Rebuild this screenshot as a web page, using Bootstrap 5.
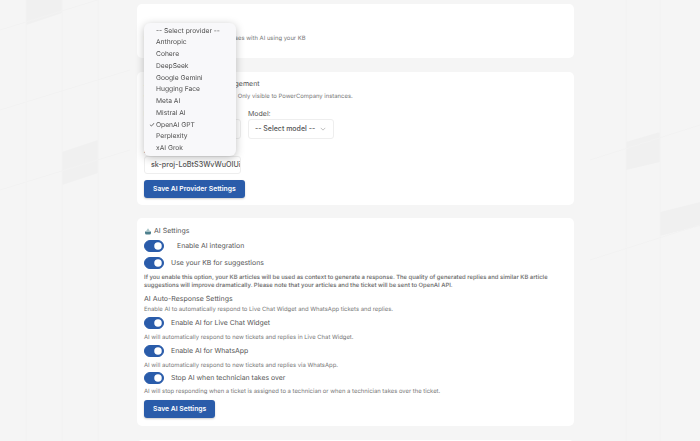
<!DOCTYPE html>
<html lang="en"><head><meta charset="utf-8"><title>AI Settings</title>
<link href="https://cdn.jsdelivr.net/npm/bootstrap@5.3.0/dist/css/bootstrap.min.css" rel="stylesheet">
<style>
html,body{height:441px;overflow:hidden}
body{background:#f5f5f5;font-family:Inter,"Liberation Sans",sans-serif;color:#555;position:relative;text-rendering:geometricPrecision}
.bg-art{position:absolute;left:0;top:0;width:700px;height:441px;filter:blur(.6px)}
.page-col{position:relative;width:437px;margin-left:137px;padding-top:4px;filter:blur(.35px)}
.pane{background:#fff;border-radius:5px;padding:0 7px;position:relative}
.pane-a{height:54px;margin-bottom:14px}
.pane-b{height:133px;padding-top:6px;margin-bottom:13px}
.pane-c{height:208px;padding-top:7px;margin-bottom:14px}
.pane-d{height:40px}
.head{font-size:7px;line-height:11px;color:#555}
.hint{font-size:5.9px;line-height:8px;color:#777;white-space:nowrap}
.bold-hint{font-weight:600;color:#777;line-height:8px;font-size:5.88px;white-space:normal}
.lead-row{padding-top:31px}
.field-label{font-size:7px;line-height:10px;color:#555}
.pick{font-size:7px;font-weight:500;color:#555;width:86px;height:19.5px;border:1px solid #eee;border-radius:3px;padding:0 0 0 6px;background-image:url("data:image/svg+xml,%3Csvg xmlns='http://www.w3.org/2000/svg' viewBox='0 0 8 5'%3E%3Cpath d='M1 1l3 3 3-3' fill='none' stroke='%23999' stroke-width='.8'/%3E%3C/svg%3E");background-size:6px 4px;background-position:right 7px center;box-shadow:none}
.key-box{font-size:7.2px;font-weight:500;color:#555;width:97px;height:18.5px;border:1px solid #eee;border-radius:3px;padding:0 0 0 6px;min-height:0}
.act{background:#2a5caa;border:0;border-radius:3px;color:#fff;font-size:6.8px;font-weight:600;height:18.5px;padding:0 9px;line-height:18.5px;box-shadow:0 1px 2px rgba(0,0,0,.2)}
.tog{display:flex;align-items:center;padding:0;margin:0;min-height:0;height:12px}
.tog .form-check-input{width:20px;height:12px;margin:0;float:none;background-color:#2a5caa;border-color:#2a5caa}
.tog .form-check-label{font-size:6.9px;line-height:12px;color:#555;margin-left:7px}
.tog .wide-gap{margin-left:13px}
.popup{position:absolute;left:7px;top:23px;width:92px;height:133px;background:#f8f8fa;border-radius:6px;box-shadow:0 2px 8px rgba(0,0,0,.25);padding:2.5px 0 0 12px;z-index:3}
.popup div{font-size:6.7px;line-height:11.75px;color:#4d4d4d;position:relative;white-space:nowrap}
.tick{position:absolute;left:-7px;top:0}
</style></head>
<body>
<svg class="bg-art" viewBox="0 0 700 441" aria-hidden="true">
<g fill="#f0f0f0"><path d="M26 0h36v13l-36 12z"/><path d="M62 152l36-12v33l-36 12z"/><path d="M626 142l34-10v30l-34 8z"/><path d="M660 212l40-10v24l-40 10z"/></g>
<g stroke="#f2f2f2" fill="none"><path d="M26 0v441M62 0v441M98 0v441M626 0v441M660 0v441M0 30l130-40M0 110l130-40M0 190l130-40M590 160l110-35M590 260l110-35"/></g>
</svg>
<div class="page-col">
<div class="pane pane-a">
  <div class="lead-row hint">Help your team write fast responses with AI using your KB</div>
</div>
<div class="pane pane-b">
  <div class="head">AI Provider &amp; API Key Management</div>
  <div class="hint mt-1">Configure your AI provider &amp; API. Only visible to PowerCompany instances.</div>
  <div class="d-flex mt-2" style="gap:7px">
    <div style="width:97px"><div class="field-label">Provider:</div><select class="form-select pick" style="width:97px"><option>OpenAI GPT</option></select></div>
    <div><div class="field-label">Model:</div><select class="form-select pick"><option>-- Select model --</option></select></div>
  </div>
  <div class="field-label" style="margin-top:7px">API Key:</div>
  <input class="form-control key-box" value="sk-proj-LoBtS3WvWuOIUi">
  <button class="btn act d-block" style="margin-top:5.5px">Save AI Provider Settings</button>
</div>
<div class="pane pane-c">
  <div class="head d-flex align-items-center" style="gap:2px">
    <svg width="8" height="8" viewBox="0 0 8 8"><path d="M1 4.5h6v1.5a1.5 1.5 0 0 1-1.5 1.5h-3A1.5 1.5 0 0 1 1 6z" fill="#4d7f8c"/><path d="M2 4.2l2-3 2 3z" fill="#a9c5c8"/></svg>
    AI Settings</div>
  <div class="form-check form-switch tog" style="margin-top:4px"><input class="form-check-input" type="checkbox" checked id="s1"><label class="form-check-label wide-gap" for="s1">Enable AI integration</label></div>
  <div class="form-check form-switch tog" style="margin-top:5px"><input class="form-check-input" type="checkbox" checked id="s2"><label class="form-check-label" for="s2">Use your KB for suggestions</label></div>
  <div class="hint bold-hint" style="margin-top:5px">If you enable this option, your KB articles will be used as context to generate a response. The quality of generated replies and similar KB article suggestions will improve dramatically. Please note that your articles and the ticket will be sent to OpenAI API.</div>
  <div class="head" style="margin-top:2.5px">AI Auto-Response Settings</div>
  <div class="hint" style="margin-top:2.5px">Enable AI to automatically respond to Live Chat Widget and WhatsApp tickets and replies.</div>
  <div class="form-check form-switch tog" style="margin-top:3px"><input class="form-check-input" type="checkbox" checked id="s3"><label class="form-check-label" for="s3">Enable AI for Live Chat Widget</label></div>
  <div class="hint" style="margin-top:4.5px">AI will automatically respond to new tickets and replies in Live Chat Widget.</div>
  <div class="form-check form-switch tog" style="margin-top:3.5px"><input class="form-check-input" type="checkbox" checked id="s4"><label class="form-check-label" for="s4">Enable AI for WhatsApp</label></div>
  <div class="hint" style="margin-top:4.5px">AI will automatically respond to new tickets and replies via WhatsApp.</div>
  <div class="form-check form-switch tog" style="margin-top:2px"><input class="form-check-input" type="checkbox" checked id="s5"><label class="form-check-label" for="s5">Stop AI when technician takes over</label></div>
  <div class="hint" style="margin-top:4.5px">AI will stop responding when a ticket is assigned to a technician or when a technician takes over the ticket.</div>
  <button class="btn act d-block" style="margin-top:3.5px">Save AI Settings</button>
</div>
<div class="pane pane-d"></div>
<div class="popup">
  <div>-- Select provider --</div><div>Anthropic</div><div>Cohere</div><div>DeepSeek</div><div>Google Gemini</div><div>Hugging Face</div><div>Meta AI</div><div>Mistral AI</div><div><span class="tick">✓</span>OpenAI GPT</div><div>Perplexity</div><div>xAI Grok</div>
</div>
</div>
<script src="https://cdn.jsdelivr.net/npm/bootstrap@5.3.0/dist/js/bootstrap.bundle.min.js"></script>
</body></html>
